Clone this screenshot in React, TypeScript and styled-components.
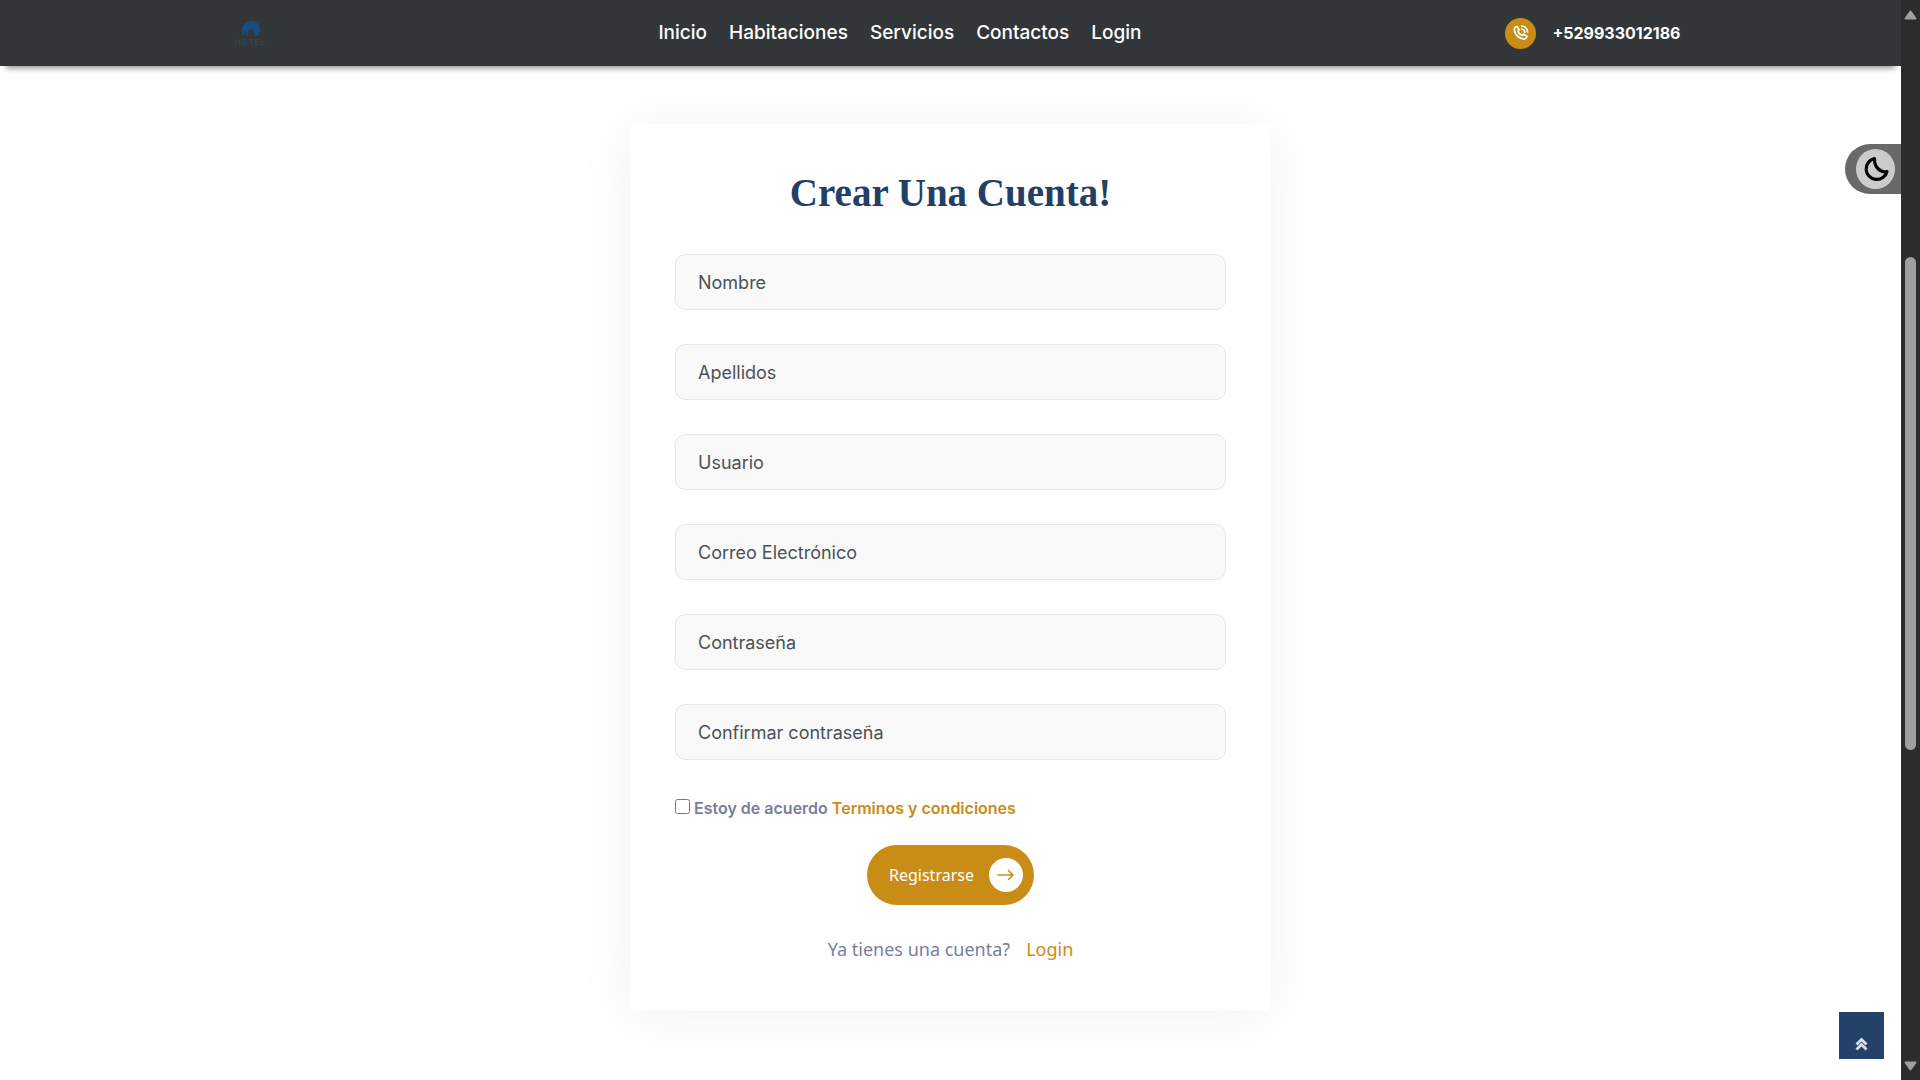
import React from "react";
import styled, { createGlobalStyle } from "styled-components";

const GlobalStyle = createGlobalStyle`
  *, *::before, *::after { box-sizing: border-box; }
  body {
    margin: 0;
    background: #fff;
    color: #797f9b;
    font-family: Inter, "Open Sans", sans-serif;
    font-size: 16px;
  }
  button, input { font: inherit; }
  a { text-decoration: none; color: inherit; }
`;

const gold = "#c98c17";
const navy = "#233f66";
const humanist = `"Noto Sans", "Open Sans", sans-serif`;

const Shell = styled.div`
  display: grid;
  grid-template-columns: minmax(0, 1fr) 19px;
  min-height: 100vh;
`;

const Page = styled.div`
  display: flex;
  flex-direction: column;
`;

const Header = styled.header`
  background: #323639;
  box-shadow: 0 8px 6px -6px #8a8a8a;
`;

const Container = styled.div`
  display: flex;
  align-items: center;
  justify-content: space-between;
  max-width: 1460px;
  height: 66px;
  margin: 0 auto;
`;

const Logo = styled.a`
  display: flex;
  flex-direction: column;
  align-items: center;
  gap: 1px;
  width: 74px;
  padding-right: 14px;
  color: #2a4766;
  font-size: 8px;
  line-height: 8px;
  letter-spacing: 1px;
`;

const Nav = styled.nav`
  display: flex;
  gap: 22px;
  color: #fff;
  font-size: 19px;
  font-weight: 500;
  line-height: 26px;
`;

const Phone = styled.a`
  display: flex;
  align-items: center;
  gap: 16px;
  color: #fff;
  font-size: 16px;
  font-weight: 700;
`;

const PhoneBadge = styled.span`
  display: grid;
  place-items: center;
  width: 31px;
  height: 31px;
  border-radius: 50%;
  background: ${gold};
`;

const Main = styled.main`
  flex: 1;
  padding: 58px 16px 68px;
`;

const Card = styled.form`
  max-width: 641px;
  margin: 0 auto;
  padding: 45px;
  border-radius: 5px;
  background: #fefefe;
  box-shadow: 0 4px 60px rgba(10, 30, 24, 0.06);
`;

const Title = styled.h1`
  margin: 0 0 37px;
  color: ${navy};
  font-family: "Liberation Serif", serif;
  font-size: 39px;
  font-weight: 700;
  line-height: 48px;
  text-align: center;
`;

const Fields = styled.div`
  display: grid;
  gap: 34px;
`;

const Field = styled.input`
  width: 100%;
  height: 56px;
  padding: 0 22px;
  border: 1px solid #e6e7e8;
  border-radius: 10px;
  background: #f9f9f9;
  color: #4c5156;
  font-size: 18px;
  &::placeholder { color: #4c5156; opacity: 1; }
`;

const Terms = styled.div`
  display: flex;
  align-items: center;
  gap: 4px;
  margin-top: 35px;
  font-size: 16px;
  font-weight: 600;
  line-height: 26px;
  a { color: ${gold}; }
`;

const Check = styled.input`
  width: 15px;
  height: 15px;
  margin: 0 0 3px;
`;

const Submit = styled.button`
  display: flex;
  align-items: center;
  gap: 15px;
  width: max-content;
  height: 60px;
  margin: 24px auto 0;
  padding: 0 11px 0 22px;
  border: 0;
  border-radius: 30px;
  background: ${gold};
  color: #fff;
  font-family: ${humanist};
  font-size: 16px;
`;

const ArrowBadge = styled.span`
  display: grid;
  place-items: center;
  width: 34px;
  height: 34px;
  border-radius: 50%;
  background: #fff;
`;

const SignIn = styled.p`
  display: flex;
  justify-content: center;
  gap: 16px;
  margin: 31px 0 4px;
  font-family: ${humanist};
  font-size: 18px;
  line-height: 26px;
  a { color: ${gold}; }
`;

const ThemeToggle = styled.button`
  position: fixed;
  top: 144px;
  right: 19px;
  display: flex;
  align-items: center;
  width: 56px;
  height: 50px;
  padding: 0 6px 0 11px;
  border: 0;
  border-radius: 25px 0 0 25px;
  background: #69696a;
`;

const ToggleKnob = styled.span`
  display: grid;
  place-items: center;
  width: 39px;
  height: 40px;
  border-radius: 50%;
  background: #cdcbca;
`;

const BackToTop = styled.button`
  position: fixed;
  right: 36px;
  bottom: 21px;
  display: grid;
  place-items: end center;
  width: 45px;
  height: 47px;
  padding: 0 0 8px;
  border: 0;
  background: #24416a;
`;

const ScrollBar = styled.aside`
  position: sticky;
  top: 0;
  display: flex;
  flex-direction: column;
  align-items: center;
  height: 100vh;
  padding: 10px 0 9px;
  background: #2c2c2c;
`;

const Track = styled.div`
  display: grid;
  flex: 1;
  grid-template-rows: 237fr 493fr 311fr;
  width: 11px;
`;

const Thumb = styled.div`
  grid-row: 2;
  border-radius: 6px;
  background: #9f9f9f;
`;

const links = ["Inicio", "Habitaciones", "Servicios", "Contactos", "Login"];

const fields = [
  { label: "Nombre", type: "text" },
  { label: "Apellidos", type: "text" },
  { label: "Usuario", type: "text" },
  { label: "Correo Electrónico", type: "email" },
  { label: "Contraseña", type: "password" },
  { label: "Confirmar contraseña", type: "password" },
];

const LogoMark = () => (
  <svg width="20" height="17" viewBox="0 0 20 17" aria-hidden="true">
    <path
      fill="#174d82"
      d="M1.500 14.500C-.5 7 3.500 1 10 1s10 5 9 10.500L17.500 13l.5 1.500-1.500 1-3 .5.5-2-1.500-1 .2-3-1.700-1.500L9.500 10l-2 .3-.8 2 .6 2.700H4.500L4.800 11l-1.300.2-.3 3.600z"
    />
  </svg>
);

const PhoneIcon = () => (
  <svg width="16" height="16" viewBox="0 0 24 24" fill="none" stroke="#fff" strokeWidth="2.600" strokeLinecap="round" strokeLinejoin="round" aria-hidden="true">
    <path d="M6.500 2.500 9.300 7.500 7.400 9.800c1.300 2.800 3.300 4.800 6 6l2.300-2 5 2.900c.1 2.600-1.700 4.300-4.500 4.300C8.500 20.500 2 14 2 6.800c0-2.700 1.700-4.400 4.500-4.300z" />
    <path d="M13 1.500c5 .3 8.700 4 9 9M12.800 6c3 .3 4.600 1.900 4.900 4.900" />
  </svg>
);

const MoonIcon = () => (
  <svg width="26" height="26" viewBox="0 0 26 26" fill="none" stroke="#000" strokeWidth="3.200" strokeLinejoin="round" aria-hidden="true">
    <path d="M11.500 2.500A10.600 10.600 0 1 0 24 15.500C17.500 17 11 11 11.500 2.500z" />
  </svg>
);

const ArrowIcon = () => (
  <svg width="17" height="12" viewBox="0 0 17 12" fill="none" stroke={gold} strokeWidth="1.500" strokeLinecap="round" strokeLinejoin="round" aria-hidden="true">
    <path d="M1 6h15M11.500 1.500 16 6l-4.500 4.500" />
  </svg>
);

const ChevronsUp = () => (
  <svg width="13" height="14" viewBox="0 0 13 14" fill="none" stroke="#dde2e9" strokeWidth="2.700" aria-hidden="true">
    <path d="M1.500 7.500l5-5 5 5M1.500 12.500l5-5 5 5" />
  </svg>
);

const ScrollArrow = ({ down = false }: { down?: boolean }) => (
  <svg width="13" height="10" viewBox="0 0 13 10" aria-hidden="true">
    <path
      fill="#9f9f9f"
      stroke="#9f9f9f"
      strokeWidth="2"
      strokeLinejoin="round"
      d={down ? "M1.500 1.500h10L6.500 8.500z" : "M1.500 8.500h10L6.500 1.500z"}
    />
  </svg>
);

export default function App() {
  return (
    <Shell>
      <GlobalStyle />
      <Page>
        <Header>
          <Container>
            <Logo href="#">
              <LogoMark />
              HOTEL
            </Logo>
            <Nav>
              {links.map((link) => (
                <a key={link} href="#">{link}</a>
              ))}
            </Nav>
            <Phone href="tel:+529933012186">
              <PhoneBadge><PhoneIcon /></PhoneBadge>
              +529933012186
            </Phone>
          </Container>
        </Header>
        <Main>
          <Card onSubmit={(e) => e.preventDefault()}>
            <Title>Crear Una Cuenta!</Title>
            <Fields>
              {fields.map((f) => (
                <Field key={f.label} type={f.type} placeholder={f.label} aria-label={f.label} />
              ))}
            </Fields>
            <Terms>
              <Check type="checkbox" id="terms" />
              <label htmlFor="terms">
                Estoy de acuerdo <a href="#">Terminos y condiciones</a>
              </label>
            </Terms>
            <Submit type="submit">
              Registrarse
              <ArrowBadge><ArrowIcon /></ArrowBadge>
            </Submit>
            <SignIn>
              Ya tienes una cuenta? <a href="#">Login</a>
            </SignIn>
          </Card>
        </Main>
      </Page>
      <ScrollBar>
        <ScrollArrow />
        <Track><Thumb /></Track>
        <ScrollArrow down />
      </ScrollBar>
      <ThemeToggle type="button" aria-label="Modo oscuro">
        <ToggleKnob><MoonIcon /></ToggleKnob>
      </ThemeToggle>
      <BackToTop type="button" aria-label="Volver arriba">
        <ChevronsUp />
      </BackToTop>
    </Shell>
  );
}
